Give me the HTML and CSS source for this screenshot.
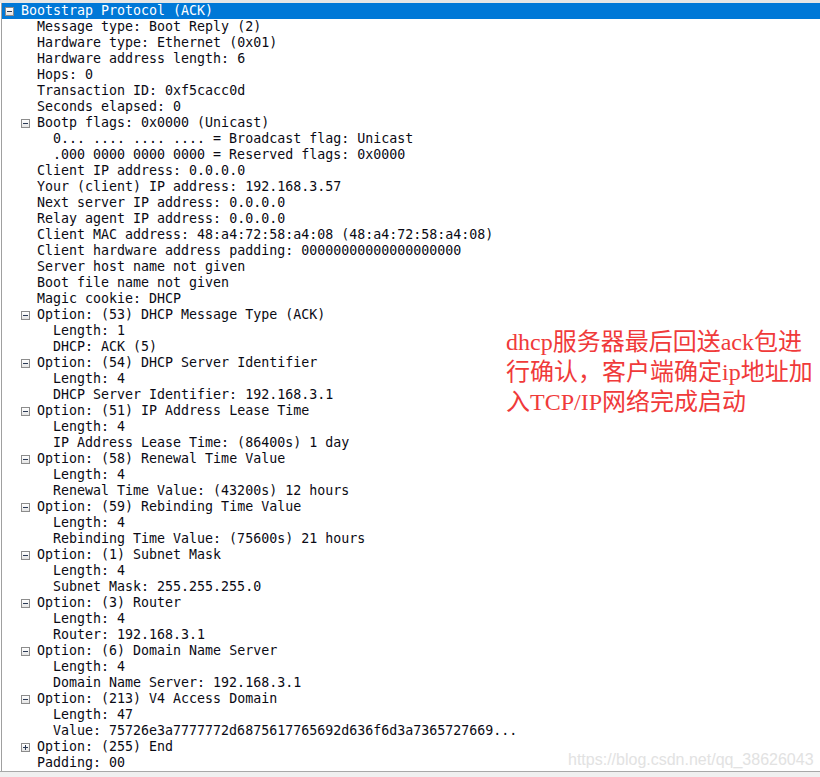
FILE: index.html
```html
<!DOCTYPE html>
<html>
<head>
<meta charset="utf-8">
<link rel="stylesheet" href="styles.css">
</head>
<body>
<div class="topstrip"></div>
<div class="pane">
  <div class="tree">
    <div class="row l0 sel"><span class="tg minus"></span>Bootstrap Protocol (ACK)</div>
    <div class="row l1">Message type: Boot Reply (2)</div>
    <div class="row l1">Hardware type: Ethernet (0x01)</div>
    <div class="row l1">Hardware address length: 6</div>
    <div class="row l1">Hops: 0</div>
    <div class="row l1">Transaction ID: 0xf5cacc0d</div>
    <div class="row l1">Seconds elapsed: 0</div>
    <div class="row l1"><span class="tg minus"></span>Bootp flags: 0x0000 (Unicast)</div>
    <div class="row l2">0... .... .... .... = Broadcast flag: Unicast</div>
    <div class="row l2">.000 0000 0000 0000 = Reserved flags: 0x0000</div>
    <div class="row l1">Client IP address: 0.0.0.0</div>
    <div class="row l1">Your (client) IP address: 192.168.3.57</div>
    <div class="row l1">Next server IP address: 0.0.0.0</div>
    <div class="row l1">Relay agent IP address: 0.0.0.0</div>
    <div class="row l1">Client MAC address: 48:a4:72:58:a4:08 (48:a4:72:58:a4:08)</div>
    <div class="row l1">Client hardware address padding: 00000000000000000000</div>
    <div class="row l1">Server host name not given</div>
    <div class="row l1">Boot file name not given</div>
    <div class="row l1">Magic cookie: DHCP</div>
    <div class="row l1"><span class="tg minus"></span>Option: (53) DHCP Message Type (ACK)</div>
    <div class="row l2">Length: 1</div>
    <div class="row l2">DHCP: ACK (5)</div>
    <div class="row l1"><span class="tg minus"></span>Option: (54) DHCP Server Identifier</div>
    <div class="row l2">Length: 4</div>
    <div class="row l2">DHCP Server Identifier: 192.168.3.1</div>
    <div class="row l1"><span class="tg minus"></span>Option: (51) IP Address Lease Time</div>
    <div class="row l2">Length: 4</div>
    <div class="row l2">IP Address Lease Time: (86400s) 1 day</div>
    <div class="row l1"><span class="tg minus"></span>Option: (58) Renewal Time Value</div>
    <div class="row l2">Length: 4</div>
    <div class="row l2">Renewal Time Value: (43200s) 12 hours</div>
    <div class="row l1"><span class="tg minus"></span>Option: (59) Rebinding Time Value</div>
    <div class="row l2">Length: 4</div>
    <div class="row l2">Rebinding Time Value: (75600s) 21 hours</div>
    <div class="row l1"><span class="tg minus"></span>Option: (1) Subnet Mask</div>
    <div class="row l2">Length: 4</div>
    <div class="row l2">Subnet Mask: 255.255.255.0</div>
    <div class="row l1"><span class="tg minus"></span>Option: (3) Router</div>
    <div class="row l2">Length: 4</div>
    <div class="row l2">Router: 192.168.3.1</div>
    <div class="row l1"><span class="tg minus"></span>Option: (6) Domain Name Server</div>
    <div class="row l2">Length: 4</div>
    <div class="row l2">Domain Name Server: 192.168.3.1</div>
    <div class="row l1"><span class="tg minus"></span>Option: (213) V4 Access Domain</div>
    <div class="row l2">Length: 47</div>
    <div class="row l2">Value: 75726e3a7777772d6875617765692d636f6d3a7365727669...</div>
    <div class="row l1"><span class="tg plus"></span>Option: (255) End</div>
    <div class="row l1">Padding: 00</div>
  </div>
  <div class="note">dhcp服务器最后回送ack包进<br>行确认，客户端确定ip地址加<br>入TCP/IP网络完成启动</div>
  <div class="watermark">https://blog.csdn.net/qq_38626043</div>
</div>
<div class="bottombar"></div>
</body>
</html>
```
FILE: styles.css
```css
html, body {
  margin: 0;
  padding: 0;
  background: #ffffff;
  width: 820px;
  height: 777px;
  overflow: hidden;
}
.topstrip {
  height: 3px;
  background: #e6e6e6;
}
.pane {
  position: relative;
  height: 768px;
  border-left: 1px solid #a0a0a0;
  margin-left: 1px;
  box-sizing: border-box;
  background: #ffffff;
}
.tree {
  display: flex;
  flex-direction: column;
  padding-left: 0;
}
.row {
  height: 16px;
  line-height: 16px;
  font-family: "DejaVu Sans Mono", "Liberation Mono", monospace;
  font-size: 13.3px;
  color: #0a0a14;
  white-space: nowrap;
  position: relative;
}
.l0 { padding-left: 19px; }
.l1 { padding-left: 35px; }
.l2 { padding-left: 51px; }
.sel {
  background: #0078d7;
  color: #ffffff;
}
.tg {
  position: absolute;
  top: 4px;
  width: 7px;
  height: 7px;
  border: 1px solid #8c8c8c;
  background: linear-gradient(#ffffff, #e4e4e4);
}
.l0 .tg { left: 3px; }
.l1 .tg { left: 19px; }
.tg::before {
  content: "";
  position: absolute;
  left: 1px;
  top: 3px;
  width: 5px;
  height: 1px;
  background: #2b3a55;
}
.tg.plus::after {
  content: "";
  position: absolute;
  left: 3px;
  top: 1px;
  width: 1px;
  height: 5px;
  background: #2b3a55;
}
.note {
  position: absolute;
  left: 504px;
  top: 324px;
  font-family: "Liberation Serif", "Noto Sans CJK SC", serif;
  font-size: 24px;
  line-height: 30px;
  color: #f03a3a;
  white-space: nowrap;
}
.watermark {
  position: absolute;
  left: 566px;
  top: 748px;
  font-family: "Liberation Sans", Arial, sans-serif;
  font-size: 16px;
  color: #e2e2e2;
  white-space: nowrap;
}
.bottombar {
  height: 6px;
  border-top: 1px solid #a8a8a8;
  background: #f0f0f0;
}
```
